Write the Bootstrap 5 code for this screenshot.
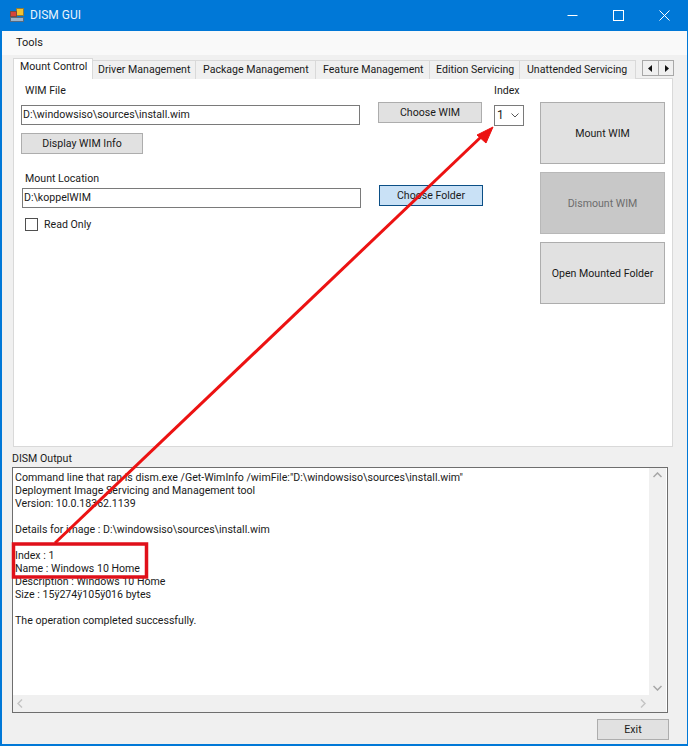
<!DOCTYPE html>
<html lang="en"><head><meta charset="utf-8"><title>DISM GUI</title>
<link rel="stylesheet" href="https://cdn.jsdelivr.net/npm/bootstrap@5.3.0/dist/css/bootstrap.min.css">
<style>
html,body{margin:0;height:746px;overflow:hidden}
body{font-family:Roboto,"Noto Sans","Liberation Sans",sans-serif;font-size:10.6px;line-height:13px;color:#1a1a1a;background:#f0f0f0}
.win{position:relative;width:688px;height:746px;border:solid #0078d7;border-width:0 1px 2px 2px;background:#f0f0f0}
.tbar{height:31px;margin:0 -1px 0 -2px;background:#0078d7;color:#e8f3fc;padding:0 1px 0 10px;font-size:12px}
.tctl{width:46px;height:31px}
.mbar{height:24px;background:#f9f9f9;padding-left:14px;padding-bottom:1px;font-size:11px}
.tabrow{height:21px;margin:3px 0 0 11px;position:relative;z-index:1}
.tb{height:19px;padding:2px 0 0 6px;margin-top:2px;border:solid #d9d9d9;border-width:1px 1px 0 0;background:#f0f0f0;white-space:nowrap}
.tb.on{height:21px;margin-top:0;background:#fff;border-left-width:1px;padding:1px 0 0 6px;width:80px}
.tbone{padding-left:5px;width:103px}
.tb2{width:120px;padding-left:7px}.tb3{width:114px;padding-left:7px}.tb4{width:90px}.tb5{width:116px;padding-left:7px}
.spin{margin:2px 0 0 6px;width:32px;height:16px;border:1px solid #a8a8a8;background:#f0f0f0}
.spin div{width:15px}.spin div+div{border-left:1px solid #a8a8a8}
.panel{margin:-1px 14px 0 11px;height:369px;background:#fff;border:1px solid #d9d9d9;padding:5px 7px 0 7px;gap:0}
.lcol{width:339px;margin-right:18px}
.lab{height:13px;margin:0 0 0 4px}
.fld{display:block;height:20px;width:339px;border:1px solid #7a7a7a;background:#fff;border-radius:0;padding:0 1px;font:inherit;line-height:18px;color:#1a1a1a;box-shadow:none}
.gbtn{background:#e1e1e1;border:1px solid #adadad;border-radius:0;padding:0;font:inherit;color:#1a1a1a;display:flex;align-items:center;justify-content:center}
.gbtn:hover{background:#e1e1e1;border-color:#adadad;color:#1a1a1a}
.wbtn{width:104px;height:21px}
.bbtn{width:125px;height:62px}
.gbtn.off{background:#c8c8c8;color:#6d6d6d;border-color:#b8b8b8;opacity:1}
.gbtn.hot{background:#c9e1f6;border-color:#0b4f86}
.ck{width:13px;height:13px;border:1px solid #4f4f4f;background:#fff;margin:0 6px 0 0}
.sel{width:30px;height:21px;border:1px solid #7a7a7a;background:#fff;padding:0 4px 0 2px;font-size:12px}
.outlab{margin:5px 0 2px 10px;height:13px}
.outbox{margin:0 0 0 10px;width:656px;height:246px;border:1px solid #6e6e6e;background:#fff;position:relative}
.outtxt{padding:3px 0 0 2px;white-space:pre;flex:1}
.sbv{width:17px;background:#f0f0f0;margin-right:1px}
.sbh{height:17px;background:#f0f0f0;margin-right:1px}
.foot{height:22px;margin:6px 18px 0 0}
.exitb{width:72px;height:21px}
.ann{position:absolute;left:-2px;top:0;width:688px;height:746px;pointer-events:none}
</style></head><body>
<div class="win d-flex flex-column">
  <div class="tbar d-flex align-items-center justify-content-between">
    <div class="d-flex align-items-center" style="gap:5px">
      <svg width="15" height="15" viewBox="0 0 15 15"><rect x="6.5" y="0.5" width="7" height="7" fill="#f2c230" stroke="#8a7a40"/><rect x="0.5" y="3.5" width="6" height="5" fill="#d8443a" stroke="#7a4a40"/><rect x="0.5" y="9.5" width="13" height="4" fill="#9fb4c8" stroke="#566a80"/></svg>
      <span>DISM GUI</span>
    </div>
    <div class="d-flex">
      <div class="tctl d-flex align-items-center justify-content-center"><svg width="11" height="11" viewBox="0 0 11 11"><path d="M0.5 5.5H10.5" stroke="#fff"/></svg></div>
      <div class="tctl d-flex align-items-center justify-content-center"><svg width="11" height="11" viewBox="0 0 11 11"><rect x=".5" y=".5" width="10" height="10" fill="none" stroke="#fff"/></svg></div>
      <div class="tctl d-flex align-items-center justify-content-center"><svg width="11" height="11" viewBox="0 0 11 11"><path d="M.5 .5L10.5 10.5M10.5 .5L.5 10.5" stroke="#fff" fill="none"/></svg></div>
    </div>
  </div>
  <div class="mbar d-flex align-items-center">Tools</div>
  <div class="tabrow d-flex">
    <div class="tb on">Mount Control</div>
    <div class="tb tbone">Driver Management</div>
    <div class="tb tb2">Package Management</div>
    <div class="tb tb3">Feature Management</div>
    <div class="tb tb4">Edition Servicing</div>
    <div class="tb tb5">Unattended Servicing</div>
    <div class="spin d-flex">
      <div class="d-flex align-items-center justify-content-center"><svg width="5" height="7" viewBox="0 0 5 7"><path d="M4 0V7L0 3.5Z" fill="#111"/></svg></div>
      <div class="d-flex align-items-center justify-content-center"><svg width="5" height="7" viewBox="0 0 5 7"><path d="M1 0V7L5 3.5Z" fill="#111"/></svg></div>
    </div>
  </div>
  <div class="panel d-flex">
    <div class="lcol">
      <div class="lab mt-0">WIM File</div>
      <div class="fld mt-2">D:\windowsiso\sources\install.wim</div>
      <button class="btn gbtn mt-2" style="width:122px;height:21px">Display WIM Info</button>
      <div class="lab" style="margin-top:18px">Mount Location</div>
      <div class="fld" style="margin:3px 0 0 1px">D:\koppelWIM</div>
      <div class="d-flex align-items-center" style="margin:10px 0 0 4px"><div class="ck"></div><span>Read Only</span></div>
    </div>
    <div style="width:116px">
      <button class="btn gbtn wbtn" style="margin-top:18px">Choose WIM</button>
      <button class="btn gbtn wbtn hot" style="margin:62px 0 0 1px">Choose Folder</button>
    </div>
    <div style="width:46px">
      <div>Index</div>
      <div class="sel d-flex align-items-center justify-content-between mt-2"><span>1</span><svg width="8" height="5" viewBox="0 0 8 5"><path d="M.5 .5L4 4L7.5 .5" fill="none" stroke="#555"/></svg></div>
    </div>
    <div class="d-flex flex-column gap-2" style="margin-top:18px">
      <button class="btn gbtn bbtn">Mount WIM</button>
      <button class="btn gbtn bbtn off">Dismount WIM</button>
      <button class="btn gbtn bbtn">Open Mounted Folder</button>
    </div>
  </div>
  <div class="outlab">DISM Output</div>
  <div class="outbox d-flex flex-column">
    <div class="d-flex flex-grow-1" style="min-height:0">
      <div class="outtxt">Command line that ran is dism.exe /Get-WimInfo /wimFile:"D:\windowsiso\sources\install.wim"
Deployment Image Servicing and Management tool
Version: 10.0.18362.1139

Details for image : D:\windowsiso\sources\install.wim

Index : 1
Name : Windows 10 Home
Description : Windows 10 Home
Size : 15ÿ274ÿ105ÿ016 bytes

The operation completed successfully.</div>
      <div class="sbv d-flex flex-column justify-content-between align-items-center py-1"><svg width="9" height="6" viewBox="0 0 9 6"><path d="M.5 5L4.5 1L8.5 5" fill="none" stroke="#a6a6a6" stroke-width="1.5"/></svg><svg width="9" height="6" viewBox="0 0 9 6"><path d="M.5 1L4.5 5L8.5 1" fill="none" stroke="#a6a6a6" stroke-width="1.5"/></svg></div>
    </div>
    <div class="sbh d-flex justify-content-between align-items-center px-1"><svg width="6" height="9" viewBox="0 0 6 9"><path d="M5 .5L1 4.5L5 8.5" fill="none" stroke="#c4c4c4" stroke-width="1.5"/></svg><svg class="me-3" width="6" height="9" viewBox="0 0 6 9"><path d="M1 .5L5 4.5L1 8.5" fill="none" stroke="#c4c4c4" stroke-width="1.5"/></svg></div>
  </div>
  <div class="foot d-flex justify-content-end"><button class="btn gbtn exitb">Exit</button></div>
  <svg class="ann" viewBox="0 0 688 746">
    <path d="M55 543L482 136" stroke="#ec1212" stroke-width="3" fill="none"/>
    <path d="M493 127L477 135L486 143Z" fill="#ec1212" stroke="#ec1212"/>
    <rect x="13.5" y="544" width="133" height="33" fill="none" stroke="#e0101a" stroke-width="3.5"/>
  </svg>
</div>
</body></html>
